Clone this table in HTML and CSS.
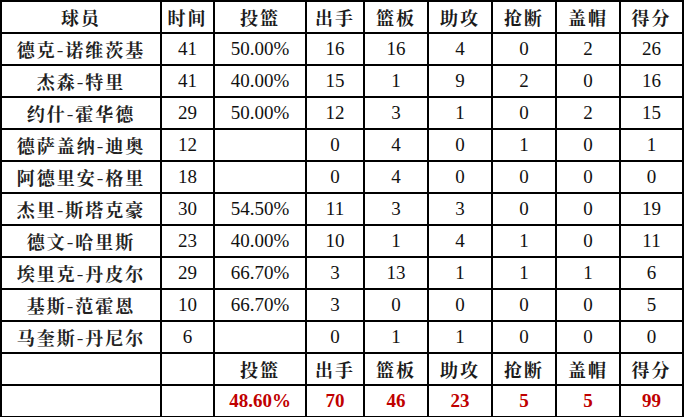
FILE: index.html
```html
<!DOCTYPE html>
<html lang="zh-CN">
<head>
<meta charset="utf-8">
<title>球员数据</title>
<link rel="stylesheet" href="styles.css">
</head>
<body>
<table class="stats">
  <colgroup>
    <col class="c-name"><col class="c-time"><col class="c-pct"><col class="c-fga">
    <col class="c-n"><col class="c-n"><col class="c-n"><col class="c-n"><col class="c-last">
  </colgroup>
  <thead>
    <tr class="head">
      <th>球员</th><th>时间</th><th>投篮</th><th>出手</th><th>篮板</th><th>助攻</th><th>抢断</th><th>盖帽</th><th>得分</th>
    </tr>
  </thead>
  <tbody>
    <tr><td class="name">德克-诺维茨基</td><td>41</td><td>50.00%</td><td>16</td><td>16</td><td>4</td><td>0</td><td>2</td><td>26</td></tr>
    <tr><td class="name">杰森-特里</td><td>41</td><td>40.00%</td><td>15</td><td>1</td><td>9</td><td>2</td><td>0</td><td>16</td></tr>
    <tr><td class="name">约什-霍华德</td><td>29</td><td>50.00%</td><td>12</td><td>3</td><td>1</td><td>0</td><td>2</td><td>15</td></tr>
    <tr><td class="name">德萨盖纳-迪奥</td><td>12</td><td></td><td>0</td><td>4</td><td>0</td><td>1</td><td>0</td><td>1</td></tr>
    <tr><td class="name">阿德里安-格里</td><td>18</td><td></td><td>0</td><td>4</td><td>0</td><td>0</td><td>0</td><td>0</td></tr>
    <tr><td class="name">杰里-斯塔克豪</td><td>30</td><td>54.50%</td><td>11</td><td>3</td><td>3</td><td>0</td><td>0</td><td>19</td></tr>
    <tr><td class="name">德文-哈里斯</td><td>23</td><td>40.00%</td><td>10</td><td>1</td><td>4</td><td>1</td><td>0</td><td>11</td></tr>
    <tr><td class="name">埃里克-丹皮尔</td><td>29</td><td>66.70%</td><td>3</td><td>13</td><td>1</td><td>1</td><td>1</td><td>6</td></tr>
    <tr><td class="name">基斯-范霍恩</td><td>10</td><td>66.70%</td><td>3</td><td>0</td><td>0</td><td>0</td><td>0</td><td>5</td></tr>
    <tr><td class="name">马奎斯-丹尼尔</td><td>6</td><td></td><td>0</td><td>1</td><td>1</td><td>0</td><td>0</td><td>0</td></tr>
    <tr class="head"><td></td><td></td><th>投篮</th><th>出手</th><th>篮板</th><th>助攻</th><th>抢断</th><th>盖帽</th><th>得分</th></tr>
    <tr class="total"><td></td><td></td><td>48.60%</td><td>70</td><td>46</td><td>23</td><td>5</td><td>5</td><td>99</td></tr>
  </tbody>
</table>
</body>
</html>
```

FILE: styles.css
```css
html, body {
  margin: 0;
  padding: 0;
  background: #ffffff;
}

.stats {
  border-collapse: collapse;
  table-layout: fixed;
  width: 684px;
  font-family: "Liberation Serif", "Noto Serif CJK SC", "Noto Sans CJK SC", serif;
  font-size: 19px;
  color: #111111;
}

.c-name { width: 160px; }
.c-time { width: 53px; }
.c-pct { width: 92px; }
.c-fga { width: 58px; }
.c-n { width: 64px; }
.c-last { width: 63px; }

.stats th,
.stats td {
  border: 2px solid #000000;
  height: 30px;
  padding: 0;
  text-align: center;
  vertical-align: middle;
  line-height: 30px;
  white-space: nowrap;
  overflow: hidden;
}

.stats th {
  font-family: "Noto Serif CJK SC", "Noto Sans CJK SC", serif;
  font-weight: 700;
  font-size: 18px;
  letter-spacing: 2px;
  color: #1a1a1a;
}

.stats td.name {
  font-family: "Noto Serif CJK SC", "Noto Sans CJK SC", serif;
  font-weight: 700;
  font-size: 18px;
  letter-spacing: 2px;
  color: #222222;
}

.total td {
  color: #c00000;
  font-weight: 700;
}
```
